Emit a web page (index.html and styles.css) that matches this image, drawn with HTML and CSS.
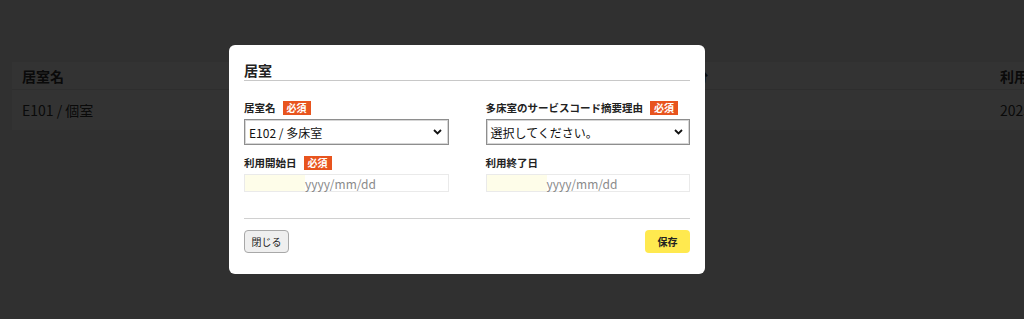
FILE: index.html
```html
<!DOCTYPE html>
<html lang="ja">
<head>
    <meta charset="UTF-8">
    <meta name="viewport" content="width=device-width, initial-scale=1.0">
    <title>居室</title>
    <link rel="stylesheet" href="styles.css">
</head>
<body>
    <div class="page">
        <table class="room-table">
            <colgroup>
                <col class="col-name">
                <col class="col-kind">
                <col class="col-start">
            </colgroup>
            <thead>
                <tr>
                    <th>居室名</th>
                    <th class="kind">居室区分</th>
                    <th>利用</th>
                </tr>
            </thead>
            <tbody>
                <tr>
                    <td>E101 / 個室</td>
                    <td class="kind">個室1</td>
                    <td>2025</td>
                </tr>
            </tbody>
        </table>
    </div>

    <div class="overlay">
        <div class="modal">
            <div class="modal-title">居室</div>
            <div class="form-grid">
                <div class="field">
                    <div class="label"><span>居室名</span><span class="badge">必須</span></div>
                    <div class="select">
                        <span>E102 / 多床室</span>
                        <svg width="9" height="6" viewBox="0 0 9 6"><path d="M1 1l3.5 3.5L8 1" fill="none" stroke="#111" stroke-width="1.8"/></svg>
                    </div>
                </div>
                <div class="field">
                    <div class="label"><span>多床室のサービスコード摘要理由</span><span class="badge">必須</span></div>
                    <div class="select">
                        <span>選択してください。</span>
                        <svg width="9" height="6" viewBox="0 0 9 6"><path d="M1 1l3.5 3.5L8 1" fill="none" stroke="#111" stroke-width="1.8"/></svg>
                    </div>
                </div>
                <div class="field">
                    <div class="label"><span>利用開始日</span><span class="badge">必須</span></div>
                    <div class="date-input"><span class="fill"></span><span class="placeholder">yyyy/mm/dd</span></div>
                </div>
                <div class="field">
                    <div class="label"><span>利用終了日</span></div>
                    <div class="date-input"><span class="fill"></span><span class="placeholder">yyyy/mm/dd</span></div>
                </div>
            </div>
            <div class="modal-footer">
                <button class="btn-close">閉じる</button>
                <button class="btn-save">保存</button>
            </div>
        </div>
    </div>
</body>
</html>
```

FILE: styles.css
```css
body {
    margin: 0;
    font-family: "Noto Sans CJK JP", "Noto Sans", sans-serif;
    background-color: #f0f0f0;
    color: #333;
    overflow: hidden;
}
.page {
    padding: 62px 0 0 12px;
}
.room-table {
    width: 1012px;
    table-layout: fixed;
    border-collapse: collapse;
    background-color: #fff;
    font-size: 14px;
}
.col-name {
    width: 628px;
}
.col-kind {
    width: 350px;
}
.room-table th {
    text-align: left;
    font-weight: bold;
    height: 27px;
    padding: 0 10px;
    border-bottom: 1px solid #e4e4e4;
    white-space: nowrap;
    overflow: hidden;
}
.room-table td {
    height: 40px;
    padding: 0 10px;
    line-height: 20px;
    vertical-align: middle;
    white-space: nowrap;
    overflow: hidden;
}
.room-table .kind {
    padding-left: 12px;
}
.overlay {
    position: fixed;
    top: 0;
    left: 0;
    right: 0;
    bottom: 0;
    background-color: rgba(0, 0, 0, 0.8);
    display: flex;
    align-items: flex-start;
    padding: 45px 0 0 229px;
}
.modal {
    width: 446px;
    background-color: #fff;
    border-radius: 6px;
    padding: 15px 15px 21px;
}
.modal-title {
    font-size: 14px;
    font-weight: bold;
    line-height: 20px;
    color: #222;
    border-bottom: 1px solid #c8c8c8;
}
.form-grid {
    display: grid;
    grid-template-columns: 1fr 1fr;
    column-gap: 37px;
    row-gap: 11px;
    margin-top: 20px;
}
.label {
    display: flex;
    align-items: center;
    font-size: 10.5px;
    font-weight: bold;
    line-height: 14px;
    color: #222;
    margin-bottom: 4px;
}
.badge {
    background-color: #e8541e;
    color: #fff;
    font-size: 10px;
    font-weight: bold;
    line-height: 14px;
    padding: 0 4px;
    margin-left: 7px;
}
.select {
    height: 26px;
    box-sizing: border-box;
    border: 1px solid #8e8e8e;
    box-shadow: inset 0 0 0 1px #d6d6d6;
    display: flex;
    align-items: center;
    justify-content: space-between;
    padding: 0 6px 0 4px;
    font-size: 12px;
    color: #111;
}
.date-input {
    height: 18px;
    box-sizing: border-box;
    border: 1px solid #eaeaea;
    display: flex;
    align-items: center;
    font-size: 12px;
}
.date-input .fill {
    width: 60px;
    height: 100%;
    background-color: #fefde9;
}
.date-input .placeholder {
    color: #8a8a8a;
}
.modal-footer {
    display: flex;
    justify-content: space-between;
    margin-top: 26px;
    padding-top: 11px;
    border-top: 1px solid #d0d0d0;
}
.modal-footer button {
    height: 23px;
    width: 45px;
    font-family: "Noto Sans CJK JP", sans-serif;
    font-size: 10px;
    border-radius: 4px;
    padding: 0;
    color: #222;
}
.btn-close {
    background-color: #efefef;
    border: 1px solid #a8a8a8;
}
.btn-save {
    background-color: #ffe94f;
    border: none;
    font-weight: bold;
}
```
